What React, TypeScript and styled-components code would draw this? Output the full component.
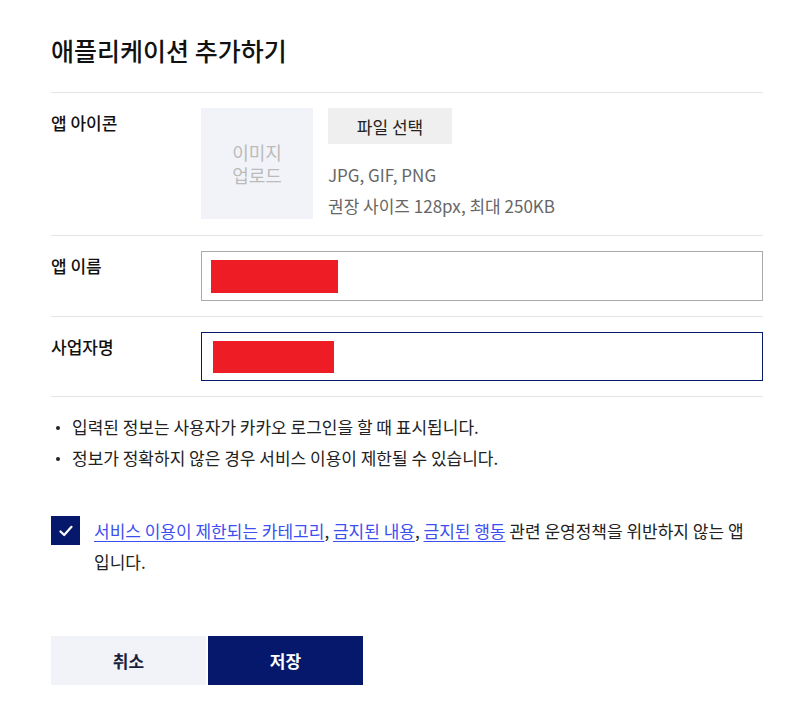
import styled, { createGlobalStyle } from "styled-components";

const GlobalStyle = createGlobalStyle`
  body {
    margin: 0;
    background: #ffffff;
    font-family: "Noto Sans CJK KR", "Noto Sans", sans-serif;
    color: #222222;
  }
`;

const Page = styled.div`
  width: 712px;
  padding: 34px 0 37px 51px;
  word-break: keep-all;
`;

const Title = styled.h1`
  margin: 0;
  font-size: 25px;
  font-weight: 500;
  line-height: 32px;
  padding-bottom: 26px;
  border-bottom: 1px solid #e4e4e4;
  color: #111111;
`;

const Row = styled.div<{ $pb?: number }>`
  display: flex;
  padding: 15px 0 ${(p) => p.$pb ?? 15}px;
  border-bottom: 1px solid #e4e4e4;
`;

const Label = styled.div`
  width: 150px;
  flex-shrink: 0;
  font-size: 17px;
  font-weight: 500;
  line-height: 30px;
  color: #111111;
`;

const Field = styled.div`
  flex: 1;
  display: flex;
  gap: 15px;
`;

const ImageBox = styled.div`
  width: 112px;
  height: 111px;
  background: #f2f3f8;
  color: #bbbbbb;
  font-size: 18px;
  line-height: 23px;
  display: flex;
  align-items: center;
  justify-content: center;
  text-align: center;
`;

const UploadInfo = styled.div`
  display: flex;
  flex-direction: column;
  align-items: flex-start;
`;

const FileButton = styled.button`
  width: 124px;
  height: 36px;
  border: none;
  background: #efefef;
  font-family: inherit;
  font-size: 17px;
  color: #222222;
  margin-bottom: 15px;
`;

const Hint = styled.div`
  font-size: 17px;
  line-height: 31px;
  color: #666666;
`;

const InputBox = styled.div<{ $focused?: boolean }>`
  flex: 1;
  height: ${(p) => (p.$focused ? 49 : 50)}px;
  box-sizing: border-box;
  border: 1px solid ${(p) => (p.$focused ? "#06186b" : "#aaaaaa")};
  display: flex;
  align-items: center;
  padding-left: ${(p) => (p.$focused ? 11 : 9)}px;
`;

const Redacted = styled.span<{ $w: number; $h: number }>`
  display: block;
  width: ${(p) => p.$w}px;
  height: ${(p) => p.$h}px;
  background: #ee1c25;
`;

const Notes = styled.ul`
  margin: 14px 0 0;
  padding: 0;
  list-style: none;
`;

const Note = styled.li`
  position: relative;
  padding-left: 21px;
  font-size: 17px;
  line-height: 31px;
  color: #222222;

  &::before {
    content: "";
    position: absolute;
    left: 5px;
    top: 15px;
    width: 4px;
    height: 4px;
    border-radius: 50%;
    background: #222222;
  }
`;

const Agree = styled.div`
  display: flex;
  gap: 14px;
  margin-top: 42px;
`;

const CheckBox = styled.span`
  width: 29px;
  height: 29px;
  flex-shrink: 0;
  margin-top: 1px;
  background: #06186b;
  display: flex;
  align-items: center;
  justify-content: center;
`;

const AgreeText = styled.p`
  margin: 0;
  font-size: 17px;
  line-height: 31px;
  color: #222222;
`;

const Link = styled.a`
  color: #3d4ff0;
  text-decoration: underline;
  text-underline-offset: 3px;
`;

const Actions = styled.div`
  display: flex;
  gap: 2px;
  margin-top: 59px;
`;

const ActionButton = styled.button<{ $primary?: boolean }>`
  width: 155px;
  height: 49px;
  border: none;
  font-family: inherit;
  font-size: 17px;
  font-weight: 700;
  background: ${(p) => (p.$primary ? "#06186b" : "#f2f3f8")};
  color: ${(p) => (p.$primary ? "#ffffff" : "#1a1f3f")};
`;

export default function App() {
  return (
    <>
      <GlobalStyle />
      <Page>
        <Title>애플리케이션 추가하기</Title>

        <Row $pb={14}>
          <Label>앱 아이콘</Label>
          <Field>
            <ImageBox>
              이미지
              <br />
              업로드
            </ImageBox>
            <UploadInfo>
              <FileButton>파일 선택</FileButton>
              <Hint>JPG, GIF, PNG</Hint>
              <Hint>권장 사이즈 128px, 최대 250KB</Hint>
            </UploadInfo>
          </Field>
        </Row>

        <Row>
          <Label>앱 이름</Label>
          <InputBox>
            <Redacted $w={127} $h={33} />
          </InputBox>
        </Row>

        <Row>
          <Label>사업자명</Label>
          <InputBox $focused>
            <Redacted $w={121} $h={32} />
          </InputBox>
        </Row>

        <Notes>
          <Note>입력된 정보는 사용자가 카카오 로그인을 할 때 표시됩니다.</Note>
          <Note>정보가 정확하지 않은 경우 서비스 이용이 제한될 수 있습니다.</Note>
        </Notes>

        <Agree>
          <CheckBox>
            <svg width="14" height="12" viewBox="0 0 14 12" fill="none">
              <path d="M1.5 6.5 L5.2 10 L12.5 1.8" stroke="#ffffff" strokeWidth="2.2" strokeLinecap="round" strokeLinejoin="round" />
            </svg>
          </CheckBox>
          <AgreeText>
            <Link>서비스 이용이 제한되는 카테고리</Link>, <Link>금지된 내용</Link>,{" "}
            <Link>금지된 행동</Link> 관련 운영정책을 위반하지 않는 앱 입니다.
          </AgreeText>
        </Agree>

        <Actions>
          <ActionButton>취소</ActionButton>
          <ActionButton $primary>저장</ActionButton>
        </Actions>
      </Page>
    </>
  );
}
